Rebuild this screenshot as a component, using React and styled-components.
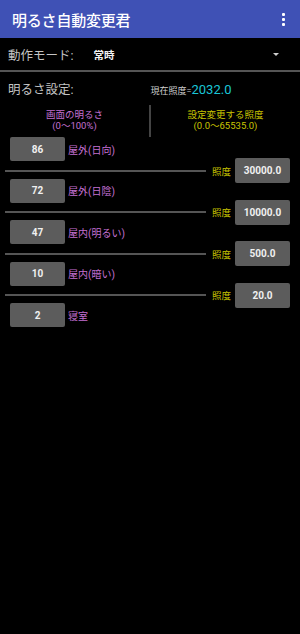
import { Fragment } from 'react';
import styled, { createGlobalStyle } from 'styled-components';

const GlobalStyle = createGlobalStyle`
    html, body {
        margin: 0;
        padding: 0;
        background: #000;
    }
    body {
        font-family: Roboto, "Noto Sans CJK JP", sans-serif;
        width: 300px;
        height: 634px;
        overflow: hidden;
    }
`;

const Screen = styled.div`
    width: 300px;
    height: 634px;
    background: #000;
    display: flex;
    flex-direction: column;
`;

const AppBar = styled.header`
    height: 38px;
    background: #3f51b5;
    display: flex;
    align-items: center;
    justify-content: space-between;
    padding: 0 9px 0 12px;
    box-sizing: border-box;
`;

const Title = styled.h1`
    margin: 0;
    font-size: 15px;
    font-weight: 500;
    color: #fff;
    letter-spacing: -0.2px;
`;

const MenuDots = styled.div`
    display: flex;
    flex-direction: column;
    gap: 2px;
    padding: 0 6px;

    span {
        width: 3px;
        height: 3px;
        background: #fff;
        border-radius: 1px;
    }
`;

const ModeRow = styled.div`
    height: 34px;
    display: flex;
    align-items: center;
    padding: 0 21px 0 8px;
    border-bottom: 2px solid #555;
    box-sizing: border-box;
`;

const SectionLabel = styled.span`
    font-size: 12.5px;
    color: #c4c4c4;
`;

const ModeValue = styled.span`
    margin-left: 20px;
    font-size: 10.5px;
    font-weight: 700;
    color: #f2f2f2;
    flex: 1;
`;

const Caret = styled.span`
    width: 0;
    height: 0;
    border-left: 3.5px solid transparent;
    border-right: 3.5px solid transparent;
    border-top: 3.5px solid #cfcfcf;
`;

const SettingsHeader = styled.div`
    height: 32px;
    display: flex;
    align-items: center;
    padding-left: 8px;
`;

const Current = styled.div`
    margin-left: 77px;
    display: flex;
    align-items: baseline;
    font-size: 9px;
    color: #d0d0d0;
    margin-top: 2px;
`;

const CurrentValue = styled.span`
    font-size: 13px;
    color: #1ac6d6;
`;

const ColumnHeads = styled.div`
    height: 33px;
    display: grid;
    grid-template-columns: 1fr 2px 1fr;
    align-items: center;
`;

const ColumnHead = styled.div`
    text-align: center;
    font-size: 9.5px;
    line-height: 11.5px;
    color: ${(p) => p.$color};
    padding-bottom: 1px;
`;

const Divider = styled.div`
    width: 2px;
    height: 32px;
    background: #444;
`;

const List = styled.div`
    display: flex;
    flex-direction: column;
`;

const LevelRow = styled.div`
    display: flex;
    align-items: center;
    padding-left: 10px;
    height: 24px;
    margin-top: ${(p) => (p.$first ? '0' : '-4.5px')};
`;

const ValueBox = styled.div`
    width: 55px;
    height: ${(p) => p.$h}px;
    background: #5c5c5c;
    border-radius: 2px;
    box-shadow: 0 1px 1px rgba(0, 0, 0, 0.6);
    display: flex;
    align-items: center;
    justify-content: center;
    color: #f0f0f0;
    font-size: 10px;
    font-weight: 700;
    flex-shrink: 0;
`;

const LevelLabel = styled.span`
    margin-left: 3px;
    font-size: 10px;
    color: #c470d2;
`;

const ThresholdRow = styled.div`
    display: flex;
    align-items: center;
    height: 25px;
    margin-top: -3px;
    padding: 0 10px 0 5px;
`;

const Rule = styled.div`
    flex: 1;
    height: 2px;
    background: #555;
`;

const LuxLabel = styled.span`
    margin: 0 4px 0 6px;
    font-size: 9.5px;
    color: #c9c400;
`;

const levels = [
    { value: '86', label: '屋外(日向)', lux: '30000.0' },
    { value: '72', label: '屋外(日陰)', lux: '10000.0' },
    { value: '47', label: '屋内(明るい)', lux: '500.0' },
    { value: '10', label: '屋内(暗い)', lux: '20.0' },
    { value: '2', label: '寝室' },
];

export default function App() {
    return (
        <Screen>
            <GlobalStyle />
            <AppBar>
                <Title>明るさ自動変更君</Title>
                <MenuDots>
                    <span />
                    <span />
                    <span />
                </MenuDots>
            </AppBar>
            <ModeRow>
                <SectionLabel>動作モード:</SectionLabel>
                <ModeValue>常時</ModeValue>
                <Caret />
            </ModeRow>
            <SettingsHeader>
                <SectionLabel>明るさ設定:</SectionLabel>
                <Current>
                    現在照度=<CurrentValue>2032.0</CurrentValue>
                </Current>
            </SettingsHeader>
            <ColumnHeads>
                <ColumnHead $color="#c470d2">
                    画面の明るさ
                    <br />
                    (0〜100%)
                </ColumnHead>
                <Divider />
                <ColumnHead $color="#c9c400">
                    設定変更する照度
                    <br />
                    (0.0〜65535.0)
                </ColumnHead>
            </ColumnHeads>
            <List>
                {levels.map((lv, i) => (
                    <Fragment key={lv.label}>
                        <LevelRow $first={i === 0}>
                            <ValueBox $h={24}>{lv.value}</ValueBox>
                            <LevelLabel>{lv.label}</LevelLabel>
                        </LevelRow>
                        {lv.lux && (
                            <ThresholdRow>
                                <Rule />
                                <LuxLabel>照度</LuxLabel>
                                <ValueBox $h={25}>{lv.lux}</ValueBox>
                            </ThresholdRow>
                        )}
                    </Fragment>
                ))}
            </List>
        </Screen>
    );
}
